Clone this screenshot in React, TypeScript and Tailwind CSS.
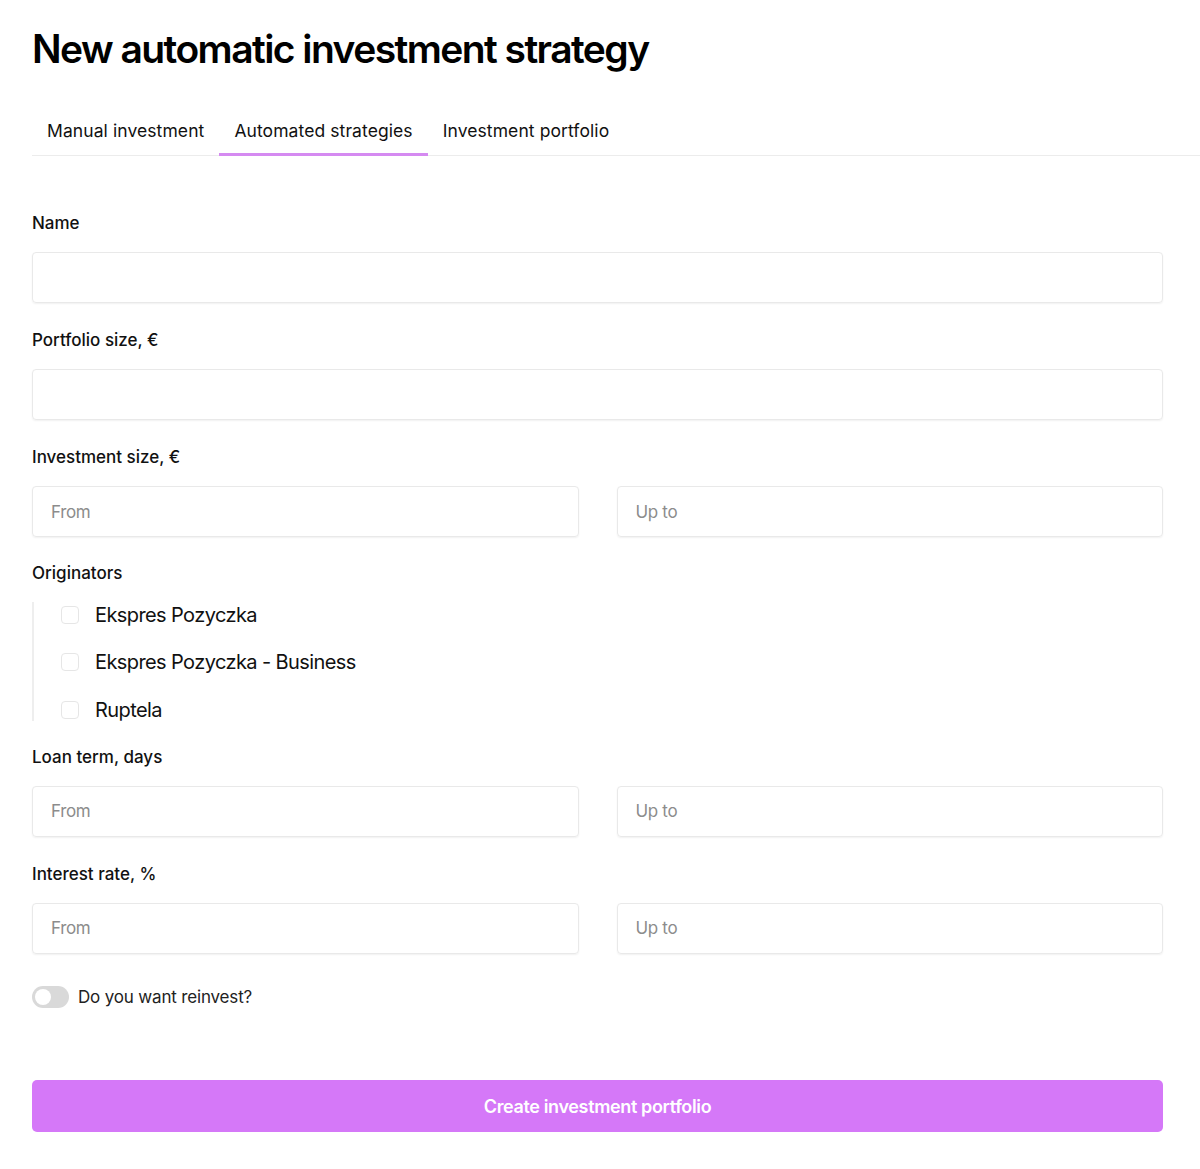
import { useState } from "react";

const font = { fontFamily: "Inter, 'Noto Sans', sans-serif" };

export default function App() {
  const [reinvest, setReinvest] = useState(false);

  return (
    <main className="min-h-screen bg-white text-[#111] pt-[26px] pb-10" style={font}>
      <h1 className="px-8 text-[39px] leading-[46px] font-semibold tracking-[-0.04em] text-black">
        New automatic investment strategy
      </h1>

      <nav className="mt-[38px] ml-8 flex border-b border-[#ececec]">
        <Tab label="Manual investment" />
        <Tab label="Automated strategies" active />
        <Tab label="Investment portfolio" />
      </nav>

      <form className="pl-8 pr-[37px] pt-[55px]">
        <Label>Name</Label>
        <Input />

        <Label className="mt-[25px]">Portfolio size, €</Label>
        <Input />

        <Label className="mt-[25px]">Investment size, €</Label>
        <Range />

        <Label className="mt-[24px]">Originators</Label>
        <div className="mt-[16px] border-l-2 border-[#eeeeee] pl-[27px] flex flex-col">
          <Check label="Ekspres Pozyczka" />
          <Check label="Ekspres Pozyczka - Business" />
          <Check label="Ruptela" />
        </div>

        <Label className="mt-[24px]">Loan term, days</Label>
        <Range />

        <Label className="mt-[25px]">Interest rate, %</Label>
        <Range />

        <div className="mt-[31px] flex items-center gap-[9px]">
          <button
            type="button"
            onClick={() => setReinvest(!reinvest)}
            className={`w-[37px] h-[22px] rounded-full p-[3px] flex ${reinvest ? "bg-[#d578f8] justify-end" : "bg-[#d9d9d9] justify-start"}`}
          >
            <span className="w-4 h-4 rounded-full bg-white block" />
          </button>
          <span className="text-[17px] tracking-[-0.01em] text-[#222]">Do you want reinvest?</span>
        </div>

        <button
          type="button"
          className="mt-[70px] w-full h-[52px] rounded-[5px] bg-[#d578f8] text-white text-[18px] font-semibold tracking-[-0.02em]"
        >
          Create investment portfolio
        </button>
      </form>
    </main>
  );
}

function Tab({ label, active }: { label: string; active?: boolean }) {
  return (
    <button
      type="button"
      className={`px-[15px] h-[46px] -mb-px text-[17.5px] tracking-[0.005em] text-[#111] border-b-[3px] ${active ? "border-[#d58af1]" : "border-transparent"}`}
    >
      {label}
    </button>
  );
}

function Label({ children, className = "" }: { children: React.ReactNode; className?: string }) {
  return (
    <div className={`text-[17px] leading-6 font-medium tracking-[0em] text-[#111] mb-[17px] ${className}`}>
      {children}
    </div>
  );
}

function Input({ placeholder }: { placeholder?: string }) {
  return (
    <input
      placeholder={placeholder}
      className="w-full h-[51px] rounded-[4px] border border-[#e9e9e9] shadow-[0_1px_2px_rgba(0,0,0,0.06)] px-[18px] text-[17px] tracking-[-0.02em] outline-none placeholder:text-[#8c8c8c]"
    />
  );
}

function Range() {
  return (
    <div className="grid grid-cols-2 gap-[38px]">
      <Input placeholder="From" />
      <Input placeholder="Up to" />
    </div>
  );
}

function Check({ label }: { label: string }) {
  return (
    <label className="flex items-center gap-[16px] h-[47.5px] first:-mt-[11px] last:-mb-[13px]">
      <span className="w-[18px] h-[18px] rounded-[4px] border border-[#e6e6e6] bg-white" />
      <span className="text-[20px] tracking-[-0.03em] text-[#111]">{label}</span>
    </label>
  );
}
